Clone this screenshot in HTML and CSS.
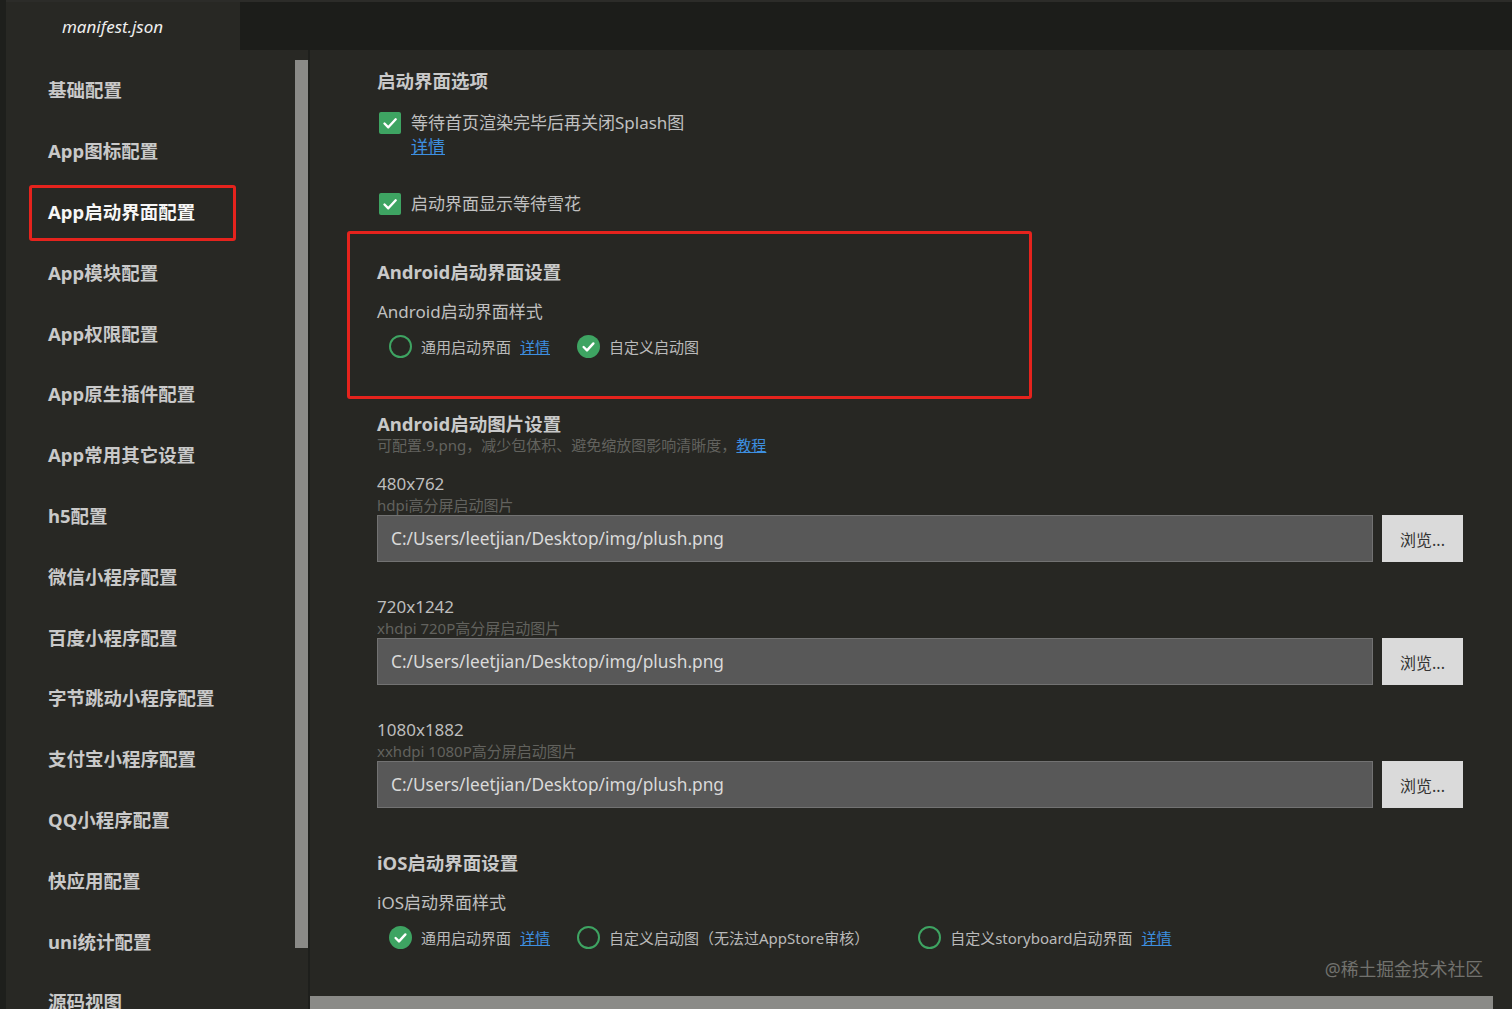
FILE: index.html
```html
<!DOCTYPE html>
<html lang="zh-CN">
<head>
<meta charset="utf-8">
<title>manifest.json</title>
<link rel="stylesheet" href="styles.css">
</head>
<body>
<div class="app">
  <header class="topbar">
    <div class="tab">manifest.json</div>
  </header>
  <div class="body">
    <aside class="side">
      <nav class="menu">
        <div class="item">基础配置</div>
        <div class="item">App图标配置</div>
        <div class="item active">App启动界面配置</div>
        <div class="item">App模块配置</div>
        <div class="item">App权限配置</div>
        <div class="item">App原生插件配置</div>
        <div class="item">App常用其它设置</div>
        <div class="item">h5配置</div>
        <div class="item">微信小程序配置</div>
        <div class="item">百度小程序配置</div>
        <div class="item">字节跳动小程序配置</div>
        <div class="item">支付宝小程序配置</div>
        <div class="item">QQ小程序配置</div>
        <div class="item">快应用配置</div>
        <div class="item">uni统计配置</div>
        <div class="item">源码视图</div>
      </nav>
      <div class="vtrack"><div class="vthumb"></div></div>
    </aside>
    <main class="main">
      <h2 class="h">启动界面选项</h2>
      <div class="check-row first">
        <span class="cb"><svg width="22" height="22" viewBox="0 0 22 22"><path d="M5.5 11.5l3.8 3.8 7.4-8" fill="none" stroke="#fff" stroke-width="2.4" stroke-linecap="round" stroke-linejoin="round"/></svg></span>
        <div class="cb-text">
          <div>等待首页渲染完毕后再关闭Splash图</div>
          <div><a class="link">详情</a></div>
        </div>
      </div>
      <div class="check-row second">
        <span class="cb"><svg width="22" height="22" viewBox="0 0 22 22"><path d="M5.5 11.5l3.8 3.8 7.4-8" fill="none" stroke="#fff" stroke-width="2.4" stroke-linecap="round" stroke-linejoin="round"/></svg></span>
        <div class="cb-text"><div>启动界面显示等待雪花</div></div>
      </div>

      <section class="sect android">
        <h2 class="h">Android启动界面设置</h2>
        <div class="sub">Android启动界面样式</div>
        <div class="radios">
          <div class="radio-item"><span class="radio"></span>通用启动界面<a class="link">详情</a></div>
          <div class="radio-item"><span class="radio on"><svg width="23" height="23" viewBox="0 0 23 23"><path d="M6.6 12l3.4 3.4 6.4-7" fill="none" stroke="#fff" stroke-width="2.4" stroke-linecap="round" stroke-linejoin="round"/></svg></span>自定义启动图</div>
        </div>
      </section>

      <h2 class="h h-img">Android启动图片设置</h2>
      <div class="desc">可配置.9.png，减少包体积、避免缩放图影响清晰度，<a class="link">教程</a></div>

      <div class="img-block">
        <div class="size">480x762</div>
        <div class="hint">hdpi高分屏启动图片</div>
        <div class="field-row">
          <div class="input">C:/Users/leetjian/Desktop/img/plush.png</div>
          <div class="btn">浏览...</div>
        </div>
      </div>
      <div class="img-block">
        <div class="size">720x1242</div>
        <div class="hint">xhdpi 720P高分屏启动图片</div>
        <div class="field-row">
          <div class="input">C:/Users/leetjian/Desktop/img/plush.png</div>
          <div class="btn">浏览...</div>
        </div>
      </div>
      <div class="img-block">
        <div class="size">1080x1882</div>
        <div class="hint">xxhdpi 1080P高分屏启动图片</div>
        <div class="field-row">
          <div class="input">C:/Users/leetjian/Desktop/img/plush.png</div>
          <div class="btn">浏览...</div>
        </div>
      </div>

      <section class="sect ios">
        <h2 class="h">iOS启动界面设置</h2>
        <div class="sub">iOS启动界面样式</div>
        <div class="radios">
          <div class="radio-item"><span class="radio on"><svg width="23" height="23" viewBox="0 0 23 23"><path d="M6.6 12l3.4 3.4 6.4-7" fill="none" stroke="#fff" stroke-width="2.4" stroke-linecap="round" stroke-linejoin="round"/></svg></span>通用启动界面<a class="link">详情</a></div>
          <div class="radio-item"><span class="radio"></span>自定义启动图（无法过AppStore审核）</div>
          <div class="radio-item wide"><span class="radio"></span>自定义storyboard启动界面<a class="link">详情</a></div>
        </div>
      </section>

      <div class="watermark">@稀土掘金技术社区</div>
      <div class="hscroll"></div>
    </main>
  </div>
</div>
</body>
</html>
```

FILE: styles.css
```css
html, body {
  margin: 0;
  height: 100%;
  overflow: hidden;
  background: #272723;
}
body {
  font-family: "Noto Sans", "Noto Sans CJK SC", sans-serif;
}
.app {
  display: flex;
  flex-direction: column;
  height: 1009px;
  border-left: 6px solid #1e1f1c;
  box-sizing: border-box;
}
.topbar {
  height: 50px;
  flex: none;
  background: #1c1d1a;
  border-top: 2px solid #2c2c29;
  box-sizing: border-box;
  display: flex;
}
.tab {
  width: 234px;
  background: #282824;
  display: flex;
  align-items: center;
  padding-left: 56px;
  box-sizing: border-box;
  font-style: italic;
  font-size: 17px;
  color: #eeeeee;
}
.body {
  flex: 1;
  display: flex;
  min-height: 0;
}
.side {
  width: 304px;
  flex: none;
  display: flex;
  background: #282824;
  border-right: 2px solid #1e1f1c;
  box-sizing: border-box;
}
.menu {
  flex: 1;
  padding-top: 9px;
}
.item {
  height: 60.8px;
  display: flex;
  align-items: center;
  padding-left: 42px;
  font-weight: 700;
  font-size: 18.5px;
  color: #c9c9c9;
  position: relative;
}
.item.active {
  color: #f6f6f6;
}
.item.active::after {
  content: "";
  position: absolute;
  left: 23px;
  top: 4.4px;
  width: 207px;
  height: 56px;
  border: 3px solid #e5231d;
  border-radius: 3px;
  box-sizing: border-box;
}
.vtrack {
  width: 13px;
  flex: none;
}
.vthumb {
  margin-top: 10px;
  height: 888px;
  background: #8a8a87;
}
.main {
  flex: 1;
  position: relative;
  padding: 18px 49px 0 67px;
  overflow: hidden;
  background: #272723;
}
.h {
  margin: 0;
  font-weight: 700;
  font-size: 18.5px;
  line-height: 26px;
  color: #c9c9c9;
}
.check-row {
  display: flex;
  gap: 10px;
  font-size: 17px;
  line-height: 24px;
  color: #c0c0c0;
}
.check-row.first { margin-top: 17px; }
.check-row.second { margin-top: 33px; }
.cb {
  width: 22px;
  height: 22px;
  flex: none;
  margin: 1px 0 0 2px;
  background: #3ea462;
  border-radius: 2px;
  display: flex;
}
.link {
  color: #3d8fe0;
  text-decoration: underline;
  cursor: pointer;
}
.sect {
  position: relative;
}
.sect.android {
  margin-top: 43px;
}
.sect.android::before {
  content: "";
  position: absolute;
  left: -30px;
  top: -28px;
  width: 685px;
  height: 168px;
  border: 3px solid #e5231d;
  border-radius: 3px;
  box-sizing: border-box;
}
.sect.ios {
  margin-top: 42px;
}
.sub {
  margin-top: 15px;
  font-size: 17px;
  line-height: 24px;
  color: #c0c0c0;
}
.radios {
  display: flex;
  align-items: center;
  height: 24px;
  margin-top: 10px;
  padding-left: 12px;
  font-size: 15px;
  color: #bababa;
}
.radio-item {
  display: flex;
  align-items: center;
  margin-right: 27px;
}
.radio-item.wide {
  margin-left: 22px;
}
.radio-item .link {
  margin-left: 9px;
}
.radio {
  width: 23px;
  height: 23px;
  flex: none;
  border-radius: 50%;
  border: 2px solid #3ea462;
  box-sizing: border-box;
  margin-right: 9px;
}
.radio.on {
  border: none;
  background: #3ea462;
  display: flex;
}
.h-img {
  margin-top: 54px;
  line-height: 24px;
}
.desc {
  font-size: 15px;
  line-height: 18px;
  color: #62625e;
}
.img-block {
  margin-top: 34px;
}
.desc + .img-block {
  margin-top: 19px;
}
.size {
  font-size: 17px;
  line-height: 22px;
  color: #bdbdbd;
}
.hint {
  margin-top: 1px;
  font-size: 15px;
  line-height: 18px;
  color: #62625e;
}
.field-row {
  display: flex;
  gap: 9px;
  margin-top: 1px;
  height: 47px;
}
.input {
  flex: 1;
  background: #585858;
  border: 1px solid #727272;
  box-sizing: border-box;
  padding-left: 13px;
  display: flex;
  align-items: center;
  font-size: 17.3px;
  color: #dadada;
}
.btn {
  width: 81px;
  flex: none;
  background: #dadada;
  color: #333333;
  font-size: 16px;
  display: flex;
  align-items: center;
  justify-content: center;
}
.watermark {
  position: absolute;
  right: 29px;
  top: 907px;
  font-size: 17.8px;
  line-height: 24px;
  color: #72726e;
}
.hscroll {
  position: absolute;
  left: 0;
  right: 19px;
  bottom: 0;
  height: 13px;
  background: #8a8a87;
}
```
